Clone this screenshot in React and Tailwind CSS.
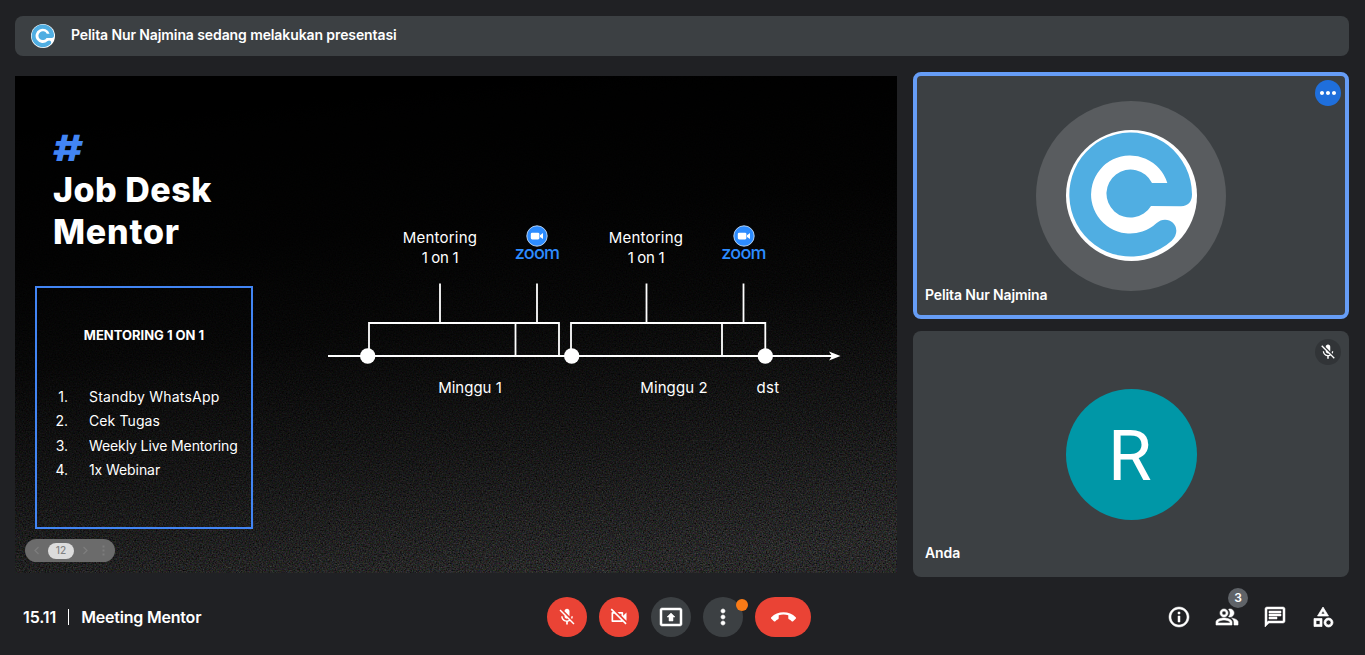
import {
  MdMicOff,
  MdOutlineVideocamOff,
  MdOutlinePresentToAll,
  MdMoreVert,
  MdMoreHoriz,
  MdCallEnd,
  MdInfoOutline,
  MdOutlinePeopleAlt,
  MdOutlineChat,
  MdOutlineCategory,
} from "react-icons/md";

function Logo({ className }) {
  return (
    <svg viewBox="138 195 393 393" className={className}>
      <circle cx="334.5" cy="391.5" r="196.5" fill="#fff" />
      <path
        fill="#50aee2"
        d="M516 388A184 186 0 1 0 455 527Q469 513 469 497A34 34 0 0 0 435 464Q421 464 410 474A117 117 0 1 1 442 354L396 354A72 72 0 1 0 393 423L483 424Q516 422 516 388Z"
      />
    </svg>
  );
}

function TopBar() {
  return (
    <header className="flex h-10 shrink-0 items-center rounded-lg bg-[#3c4043] pl-4">
      <Logo className="size-6" />
      <span className="-mt-0.5 ml-4 text-[14px] leading-5 font-semibold tracking-[-0.1px] text-white">
        Pelita Nur Najmina sedang melakukan presentasi
      </span>
    </header>
  );
}

function Grain() {
  return (
    <svg className="absolute inset-0 size-full" aria-hidden="true">
      <defs>
        <filter id="grain" x="0" y="0" width="100%" height="100%" colorInterpolationFilters="sRGB">
          <feTurbulence type="fractalNoise" baseFrequency="0.7" numOctaves="2" seed="4" />
          <feColorMatrix values="0.32 0.1 0.1 0 -0.1  0.1 0.32 0.1 0 -0.1  0.1 0.1 0.32 0 -0.1  0 0 0 0 1" />
        </filter>
        <linearGradient id="fade" x1="0.4" y1="0" x2="0.58" y2="1">
          <stop offset="0" stopColor="#000" />
          <stop offset="0.3" stopColor="#101010" />
          <stop offset="0.5" stopColor="#303030" />
          <stop offset="0.75" stopColor="#8a8a8a" />
          <stop offset="1" stopColor="#f8f8f8" />
        </linearGradient>
        <mask id="fall">
          <rect width="100%" height="100%" fill="url(#fade)" />
        </mask>
      </defs>
      <g mask="url(#fall)">
        <rect width="100%" height="100%" filter="url(#grain)" />
      </g>
    </svg>
  );
}

function Timeline() {
  return (
    <svg viewBox="15 76 882 497" className="absolute inset-0 size-full" fill="none" stroke="#fff" strokeWidth="1.8">
      <path d="M328 356H832" strokeWidth="2" />
      <path d="M369 356V323H559V356M515.5 323V356M440 283.5V323M537 283.5V323" />
      <path d="M571 356V323H765.3V356M722 323V356M646.5 283.5V323M743.5 283.5V323" />
      <path d="M840.5 356L829 351.5L832 356L829 360.5Z" fill="#fff" stroke="none" />
      <g fill="#fff" stroke="none">
        <circle cx="367.7" cy="356" r="7.7" />
        <circle cx="571.7" cy="356" r="7.7" />
        <circle cx="765.3" cy="356" r="7.7" />
      </g>
    </svg>
  );
}

function ZoomMark({ className }) {
  return (
    <div className={`absolute flex w-[60px] flex-col items-center ${className}`}>
      <svg viewBox="0 0 22 22" className="size-[22px]">
        <circle cx="11" cy="11" r="10.2" fill="#2d8cff" stroke="#c3dcfb" strokeWidth="0.9" />
        <rect x="4.8" y="7.7" width="8.6" height="6.7" rx="1.4" fill="#fff" />
        <path d="M14 10.2L17 8V14L14 11.9Z" fill="#fff" />
      </svg>
      <span className="-mt-[4px] text-[18px] leading-5 font-medium tracking-[-0.8px] text-[#2d8cff]">zoom</span>
    </div>
  );
}

function Label({ className, children }) {
  return (
    <div className={`absolute text-center text-[15px] leading-5 whitespace-nowrap text-white ${className}`}>
      {children}
    </div>
  );
}

const duties = [
  ["1.", "Standby WhatsApp", "tracking-[0.22px]"],
  ["2.", "Cek Tugas", "tracking-[0.1px]"],
  ["3.", "Weekly Live Mentoring", "tracking-[-0.11px]"],
  ["4.", "1x Webinar", "tracking-[-0.08px]"],
];

function Slide() {
  return (
    <section className="relative mt-1 h-[497px] w-[882px] shrink-0 overflow-hidden bg-black">
      <Grain />
      <Timeline />
      <div className="relative flex h-full w-[240px] flex-col pt-[52px] pl-5">
        <div className="pl-[18px]">
          <div className="h-[40px] w-[30px] origin-left scale-x-[1.28] -skew-x-[1deg] text-[36px] leading-[40px] font-extrabold text-[#4285f4]">
            #
          </div>
          <h1 className="mt-[1px] text-[34px] leading-[42px] font-extrabold tracking-[0.5px] whitespace-nowrap text-white">
            Job Desk
            <br />
            <span className="tracking-[0.8px]">Mentor</span>
          </h1>
        </div>
        <div className="mt-[33px] h-[243px] w-[218px] shrink-0 border-2 border-[#4285f4] pt-[37px] text-white">
          <h2 className="text-center text-[13px] leading-5 font-bold">MENTORING 1 ON 1</h2>
          <ol className="mt-[39.4px]">
            {duties.map(([n, text, tracking]) => (
              <li key={n} className="flex h-[24.3px] items-center text-[14px]">
                <span className="w-[31px] text-right">{n}</span>
                <span className={`ml-[21px] whitespace-nowrap ${tracking}`}>{text}</span>
              </li>
            ))}
          </ol>
        </div>
        <div className="relative mt-[10px] -ml-[10px] flex h-[23px] w-[90px] shrink-0 items-center rounded-full bg-[#6b6b6b]">
          <svg viewBox="0 0 90 23" className="absolute w-[90px]" fill="none" stroke="#7d7d7d" strokeWidth="1.3">
            <path d="M13.5 8L10 11.5L13.5 15M58.5 8L62 11.5L58.5 15" />
            <path d="M78.5 6.5V8.5M78.5 10.5V12.5M78.5 14.5V16.5" strokeWidth="2" />
          </svg>
          <span className="ml-[23px] flex h-4 w-[26px] items-center justify-center rounded-full bg-[#dcdcdc] text-[10px] font-medium text-[#828282]">
            12
          </span>
        </div>
      </div>
      <Label className="top-[152px] left-[375px] w-[100px]">
        <div className="tracking-[0.2px]">Mentoring</div>
        <div className="tracking-[-0.3px]">1 on 1</div>
      </Label>
      <Label className="top-[152px] left-[581px] w-[100px]">
        <div className="tracking-[0.2px]">Mentoring</div>
        <div className="tracking-[-0.3px]">1 on 1</div>
      </Label>
      <ZoomMark className="top-[149px] left-[492px]" />
      <ZoomMark className="top-[149px] left-[698.5px]" />
      <Label className="top-[302px] left-[405px] w-[100px]">Minggu 1</Label>
      <Label className="top-[302px] left-[609px] w-[100px] tracking-[0.1px]">Minggu 2</Label>
      <Label className="top-[302px] left-[703px] w-[100px] tracking-[0.3px]">dst</Label>
    </section>
  );
}

function Tiles() {
  return (
    <aside className="flex w-[436px] shrink-0 flex-col gap-3">
      <div className="relative flex h-[247px] items-center justify-center rounded-lg border-4 border-[#669df6] bg-[#3c4043]">
        <div className="flex size-[190px] items-center justify-center rounded-full bg-[#595c5f]">
          <Logo className="size-[131px]" />
        </div>
        <span className="absolute bottom-[10px] left-2 text-[14px] leading-5 font-semibold tracking-[-0.12px] text-white">
          Pelita Nur Najmina
        </span>
        <span className="absolute top-1 right-1 flex size-[26px] items-center justify-center rounded-full bg-[#1f6fdc] text-white">
          <MdMoreHoriz size={24} />
        </span>
      </div>
      <div className="relative flex h-[246px] items-center justify-center rounded-lg bg-[#3c4043]">
        <div className="flex size-[131px] items-center justify-center rounded-full bg-[#0097a7] pt-[2px] pr-[2px] font-[Roboto,sans-serif] text-[71px] leading-none text-white">
          R
        </div>
        <span className="absolute bottom-[14px] left-3 text-[14px] leading-5 font-semibold tracking-[-0.1px] text-white">
          Anda
        </span>
        <span className="absolute top-2 right-2 flex size-[26px] items-center justify-center rounded-full bg-[#313437] text-white">
          <MdMicOff size={18} />
        </span>
      </div>
    </aside>
  );
}

function Controls() {
  return (
    <footer className="flex h-20 shrink-0 items-center">
      <div className="flex w-[532px] shrink-0 items-center pl-2 text-[16px] font-semibold text-white">
        <span className="-mt-px tracking-[-0.1px]">15.11</span>
        <span className="ml-3 h-4 w-px bg-white" />
        <span className="-mt-px ml-3 tracking-[-0.2px]">Meeting Mentor</span>
      </div>
      <div className="flex gap-3 text-white">
        <button className="flex size-10 items-center justify-center rounded-full bg-[#ea4335]">
          <MdMicOff size={20} />
        </button>
        <button className="flex size-10 items-center justify-center rounded-full bg-[#ea4335]">
          <MdOutlineVideocamOff size={20} />
        </button>
        <button className="flex size-10 items-center justify-center rounded-full bg-[#3c4043]">
          <MdOutlinePresentToAll size={24} className="stroke-white stroke-[0.5px] [&>path[fill=none]]:stroke-none" />
        </button>
        <button className="relative flex size-10 items-center justify-center rounded-full bg-[#3c4043]">
          <MdMoreVert size={24} className="stroke-white stroke-[0.6px] [&>path[fill=none]]:stroke-none" />
          <span className="absolute top-[2px] -right-[5px] size-3 rounded-full bg-[#fa7b17]" />
        </button>
        <button className="flex h-10 w-14 items-center justify-center rounded-full bg-[#ea4335]">
          <MdCallEnd size={25} />
        </button>
      </div>
      <div className="mr-[2px] ml-auto flex text-white">
        <button className="flex size-12 items-center justify-center">
          <MdInfoOutline size={24} className="stroke-white stroke-[0.5px] [&>path[fill=none]]:stroke-none" />
        </button>
        <button className="relative flex size-12 items-center justify-center">
          <MdOutlinePeopleAlt size={24} className="stroke-white stroke-[0.6px] [&>path[fill=none]]:stroke-none" />
          <span className="absolute -top-[5px] left-[25px] flex size-5 items-center justify-center rounded-full bg-[#5f6368] text-[12px] font-semibold">
            3
          </span>
        </button>
        <button className="flex size-12 items-center justify-center">
          <MdOutlineChat size={24} className="stroke-white stroke-[0.5px] [&>path[fill=none]]:stroke-none" />
        </button>
        <button className="flex size-12 items-center justify-center">
          <MdOutlineCategory size={24} className="stroke-white stroke-[0.7px] [&>path[fill=none]]:stroke-none" />
        </button>
      </div>
    </footer>
  );
}

export default function App() {
  return (
    <div className="flex h-[655px] w-[1365px] flex-col overflow-hidden bg-[#202124] px-[15px] pt-4 font-[Inter,sans-serif] [&>*]:mr-[1px]">
      <TopBar />
      <main className="mt-4 flex h-[505px] shrink-0 gap-4">
        <Slide />
        <Tiles />
      </main>
      <Controls />
    </div>
  );
}
